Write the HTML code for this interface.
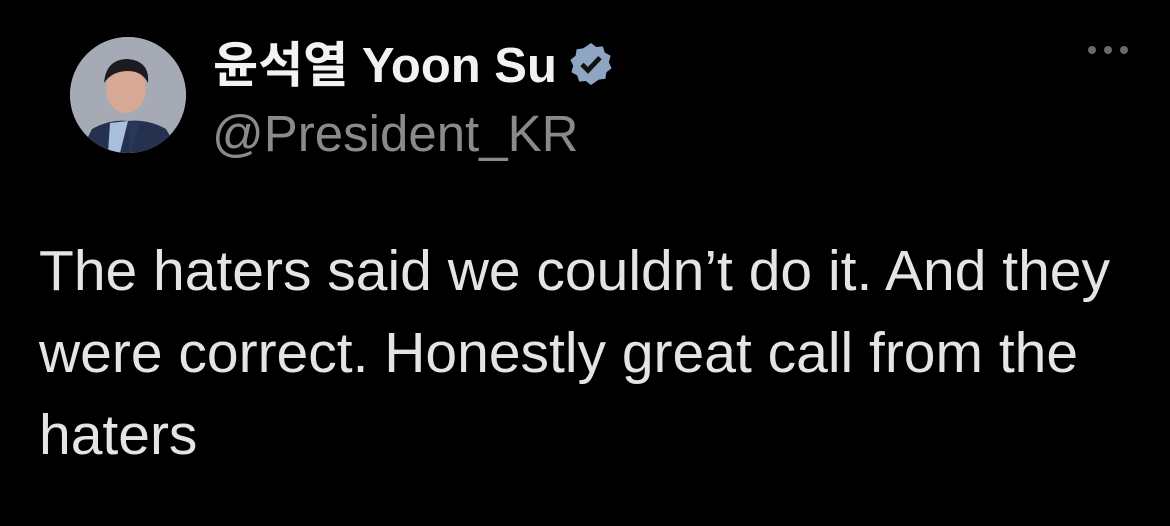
<!DOCTYPE html>
<html><head><meta charset="utf-8"><style>
html,body{margin:0;padding:0;background:#000;width:1170px;height:526px;overflow:hidden}
body{position:relative;font-family:"Liberation Sans","Noto Sans CJK KR",sans-serif}
.av{position:absolute;left:70px;top:37px;width:116px;height:116px;border-radius:50%;overflow:hidden;background:#a4a8b3}
.name{position:absolute;left:213px;top:26px;font-size:49px;font-weight:bold;color:#f2f2f2;white-space:nowrap}
.handle{position:absolute;left:212px;top:104px;font-size:51px;color:#8a8a8a;white-space:nowrap}
.body{position:absolute;left:39px;top:230px;font-size:57px;line-height:82px;color:#e4e4e4;width:1120px}
.dots{position:absolute;left:1088px;top:41px}
.dots span{display:inline-block;width:8px;height:8px;border-radius:50%;background:#6a6a6a;margin-right:8px}
</style></head><body>
<div class="av"><svg width="116" height="116" viewBox="0 0 116 116">
<rect width="116" height="116" fill="#a6aab4"/>
<path d="M10 116 L22 92 Q40 82 58 84 Q78 82 96 92 L110 116Z" fill="#25324f"/>
<path d="M40 86 L58 84 L50 116 L38 116Z" fill="#a9c0dc"/>
<path d="M58 84 L70 86 L60 116Z" fill="#2a3858"/>
<ellipse cx="56" cy="52" rx="20" ry="24" fill="#d7a893"/>
<path d="M34 46 Q36 22 58 22 Q80 24 78 46 Q72 34 58 34 Q42 34 34 46Z" fill="#1c1c20"/>
</svg></div>
<div class="name">윤석열 Yoon Su <svg style="vertical-align:-6px;margin-left:-4px" width="48" height="48" viewBox="0 0 24 24"><path fill="#8ea6c2" d="M12 1.5l2.6 2 3.3-.3 1 3.1 2.9 1.6-.9 3.2 1.4 3-2.6 2-.5 3.300-3.3.4L12 22.5l-2.6-2-3.3.3-1-3.1-2.9-1.6.9-3.2-1.4-3 2.6-2 .5-3.3 3.3-.4z"/><path d="M7.5 12.2l3 3 6-6.4" stroke="#111" stroke-width="2.4" fill="none"/></svg></div>
<div class="handle">@President_KR</div>
<div class="dots"><span></span><span></span><span></span></div>
<div class="body">The haters said we couldn’t do it. And they<br>were correct. Honestly great call from the<br>haters</div>
</body></html>
